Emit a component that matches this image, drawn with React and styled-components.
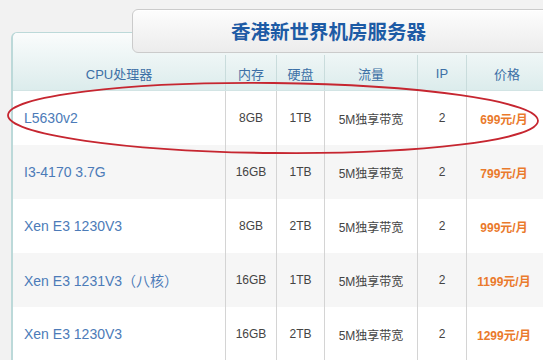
import React from "react";
import styled, { createGlobalStyle } from "styled-components";

const Global = createGlobalStyle`
  html, body { margin: 0; padding: 0; background: #f2f2f2; }
  body { font-family: "Liberation Sans", "Noto Sans CJK SC", sans-serif; }
`;

const Page = styled.div`
  position: relative;
  width: 543px;
  height: 360px;
  overflow: hidden;
  padding: 9px 0 0 11px;
  box-sizing: border-box;
  background: #f2f2f2;
`;

const TitleTab = styled.div`
  position: relative;
  z-index: 2;
  margin-left: 121px;
  width: 460px;
  height: 44px;
  box-sizing: border-box;
  border: 1px solid #cbcbcb;
  border-radius: 6px;
  background: linear-gradient(#fdfdfd, #ececec);
  box-shadow: inset 0 1px 0 #ffffff;
  display: flex;
  align-items: center;
  padding-left: 98px;
  padding-bottom: 2px;
  font-size: 19.5px;
  font-weight: bold;
  color: #1d5ba5;
  letter-spacing: 0px;
`;

const Panel = styled.div`
  margin-top: -21px;
  width: 570px;
  border: 1px solid #bcd9d9;
  border-left: 2px solid #bcd9d9;
  border-right: none;
  border-radius: 6px 0 0 0;
  background: #fff;
`;

const HeadWrap = styled.div`
  padding-top: 22px;
  background: linear-gradient(#fafcfc, #dcecec);
  border-bottom: 1px solid #d2e4e4;
  border-radius: 5px 0 0 0;
`;

const cols = "213px 51px 48px 93px 49px 81px";

const HeadRow = styled.div`
  display: grid;
  grid-template-columns: ${cols};
  height: 35px;
`;

const HeadCell = styled.div`
  display: flex;
  align-items: center;
  justify-content: center;
  font-size: 13px;
  color: #3d70a6;
  border-right: 1px solid ${(p) => (p.$last ? "transparent" : "#c9dcdc")};
  padding-top: 2px;
`;

const Row = styled.div`
  display: grid;
  grid-template-columns: ${cols};
  height: 54px;
  background: ${(p) => (p.$alt ? "#f6f6f6" : "#ffffff")};
`;

const Cell = styled.div`
  display: flex;
  align-items: center;
  justify-content: ${(p) => (p.$left ? "flex-start" : "center")};
  padding-left: ${(p) => (p.$left ? "11px" : "0")};
  border-right: 1px solid ${(p) => (p.$last ? "transparent" : "#d4d4d4")};
  font-size: ${(p) => (p.$left ? "14px" : "12px")};
  color: ${(p) => (p.$left ? "#4c7bb8" : "#444")};
  white-space: nowrap;
`;

const Price = styled(Cell)`
  font-weight: bold;
  color: #ea7a2c;
  padding-right: 6px;
`;

const Ellipse = styled.svg`
  position: absolute;
  left: 0;
  top: 0;
  z-index: 3;
  pointer-events: none;
`;

const rows = [
  ["L5630v2", "8GB", "1TB", "5M独享带宽", "2", "699元/月"],
  ["I3-4170 3.7G", "16GB", "1TB", "5M独享带宽", "2", "799元/月"],
  ["Xen E3 1230V3", "8GB", "2TB", "5M独享带宽", "2", "999元/月"],
  ["Xen E3 1231V3（八核）", "16GB", "1TB", "5M独享带宽", "2", "1199元/月"],
  ["Xen E3 1230V3", "16GB", "2TB", "5M独享带宽", "2", "1299元/月"],
];

const heads = ["CPU处理器", "内存", "硬盘", "流量", "IP", "价格"];

export default function App() {
  return (
    <>
      <Global />
      <Page>
        <TitleTab>香港新世界机房服务器</TitleTab>
        <Panel>
          <HeadWrap>
            <HeadRow>
              {heads.map((h, i) => (
                <HeadCell key={h} $last={i === heads.length - 1}>
                  {h}
                </HeadCell>
              ))}
            </HeadRow>
          </HeadWrap>
          {rows.map((r, i) => (
            <Row key={i} $alt={i % 2 === 1}>
              <Cell $left>{r[0]}</Cell>
              <Cell>{r[1]}</Cell>
              <Cell>{r[2]}</Cell>
              <Cell>{r[3]}</Cell>
              <Cell>{r[4]}</Cell>
              <Price $last>{r[5]}</Price>
            </Row>
          ))}
        </Panel>
        <Ellipse width="543" height="360" viewBox="0 0 543 360">
          <ellipse
            cx="273"
            cy="118"
            rx="265"
            ry="35"
            transform="rotate(0.6 273 118)"
            fill="none"
            stroke="#c62630"
            strokeWidth="1.8"
          />
        </Ellipse>
      </Page>
    </>
  );
}
